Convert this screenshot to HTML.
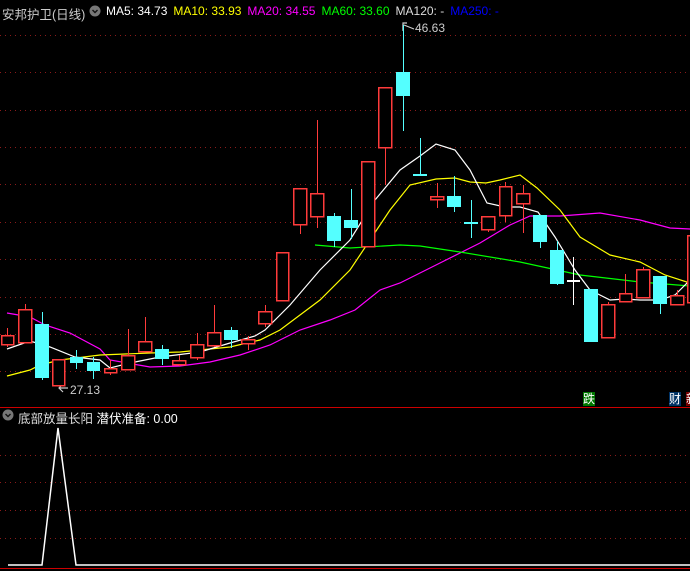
<!DOCTYPE html><html><head><meta charset="utf-8"><style>
body{margin:0;background:#000;width:690px;height:571px;overflow:hidden;position:relative;font-family:"Liberation Sans","Noto Sans CJK SC",sans-serif}
.t{position:absolute;font-size:12.5px;white-space:nowrap}
.s{margin-right:6px}
</style></head><body>
<svg width="690" height="571" style="position:absolute;left:0;top:0" shape-rendering="crispEdges">
<g stroke="#8a1a1a" stroke-dasharray="1 4">
<line x1="0" x2="690" y1="35.5" y2="35.5"/><line x1="0" x2="690" y1="72.5" y2="72.5"/><line x1="0" x2="690" y1="110.5" y2="110.5"/><line x1="0" x2="690" y1="147.5" y2="147.5"/><line x1="0" x2="690" y1="184.5" y2="184.5"/><line x1="0" x2="690" y1="222.5" y2="222.5"/><line x1="0" x2="690" y1="259.5" y2="259.5"/><line x1="0" x2="690" y1="297.5" y2="297.5"/><line x1="0" x2="690" y1="334.5" y2="334.5"/><line x1="0" x2="690" y1="371.5" y2="371.5"/>
<line x1="0" x2="690" y1="455.5" y2="455.5"/><line x1="0" x2="690" y1="482.5" y2="482.5"/><line x1="0" x2="690" y1="510.5" y2="510.5"/><line x1="0" x2="690" y1="538.5" y2="538.5"/>
</g>
<line x1="0" x2="690" y1="407.5" y2="407.5" stroke="#c00"/>
<line x1="0" x2="690" y1="568.5" y2="568.5" stroke="#c00"/>
<g shape-rendering="auto" fill="none" stroke-width="1.2">
<polyline stroke="#ff00ff" points="7,313 30,317 45,325 70,333 100,349 110,360 150,367 180,366 210,362 240,355 270,345 300,330 330,320 355,310 380,290 400,283 440,263 480,243 510,225 530,216 560,216 600,213 640,220 670,228 690,229"/>
<polyline stroke="#00ff00" points="315,245 350,248 400,245 420,246 460,252 520,262 580,275 640,282 690,286"/>
<polyline stroke="#ffff00" points="7,376 30,370 40,365 60,360 100,355 150,353 180,352 230,347 260,340 280,330 320,300 350,270 370,240 390,210 410,185 436,179 455,178 470,182 486,183 500,180 520,175 537,188 560,210 580,237 610,255 640,262 665,275 690,283"/>
<polyline stroke="#ffffff" points="7,349 30,341 50,347 75,357 100,360 110,368 130,363 160,357 200,352 230,343 255,336 265,330 290,305 320,270 350,240 375,200 400,170 420,156 436,144 455,150 470,170 487,203 505,207 520,207 538,212 555,237 575,270 590,290 610,300 625,299 640,300 660,300 675,295 690,280"/>
<polyline stroke="#fff" stroke-width="1.5" points="8,565 42,565 58,428 76,565 690,565"/>
<polyline stroke="#ccc" points="403,24 403,30 M403,24 407,24"/>
<path stroke="#ccc" d="M403,31 V23 H407 M404,25 L414,29"/>
<path stroke="#ccc" d="M63,392 L59,388 L63,384 M59,388 H68"/>
<path stroke="#222" stroke-width="1.5" d="M92,10 L95,13 L98,10 M4,413 L7,416 L10,413"/>
</g>
<g id="c"></g>
</svg>
<div class="t" style="left:2px;top:4px;color:#ccc">安邦护卫(日线)</div>
<svg style="position:absolute;left:89px;top:5px" width="12" height="12"><circle cx="6" cy="6" r="5.5" fill="#777"/><path d="M3.5,5 L6,7.5 L8.5,5" stroke="#111" stroke-width="1.4" fill="none"/></svg>
<div class="t" style="left:106px;top:4px;font-size:12px"><span class="s" style="color:#fff">MA5: 34.73</span><span class="s" style="color:#ff0">MA10: 33.93</span><span class="s" style="color:#f0f">MA20: 34.55</span><span class="s" style="color:#0f0">MA60: 33.60</span><span class="s" style="color:#ddd">MA120: -</span><span style="color:#00f">MA250: -</span></div>
<div class="t" style="left:415px;top:21px;color:#ccc;font-size:12px">46.63</div>
<div class="t" style="left:70px;top:383px;color:#ccc;font-size:12px">27.13</div>
<svg style="position:absolute;left:2px;top:409px" width="12" height="12"><circle cx="6" cy="6" r="5.5" fill="#777"/><path d="M3.5,5 L6,7.5 L8.5,5" stroke="#111" stroke-width="1.4" fill="none"/></svg>
<div class="t" style="left:18px;top:408px;color:#ddd">底部放量长阳 <span style="color:#fff">潜伏准备: 0.00</span></div>
<div class="t" style="left:583px;top:392px;color:#fff;background:#070;font-size:12px;line-height:14px">跌</div>
<div class="t" style="left:669px;top:392px;color:#fff;background:#036;font-size:12px;line-height:14px">财</div>
<div class="t" style="left:686px;top:392px;color:#fff;background:#700;font-size:12px;line-height:14px;width:4px;overflow:hidden">新</div>
<script>
var d=[[1,13,335,344,328,347,'r'],[18,31,309,342,304,342,'r'],[35,48,324,377,312,380,'c'],[52,64,359,385,359,385,'r'],[70,82,357,362,350,369,'c'],[87,99,362,370,357,379,'c'],[104,116,368,372,360,375,'r'],[121,134,355,369,329,369,'r'],[138,151,341,351,317,351,'r'],[155,168,349,358,345,365,'c'],[172,185,360,364,355,366,'r'],[190,203,344,357,333,360,'r'],[207,220,332,345,305,347,'r'],[224,237,330,339,327,348,'c'],[241,254,339,343,336,350,'r'],[258,271,311,323,305,327,'r'],[276,288,252,300,252,300,'r'],[293,306,188,224,188,234,'r'],[310,323,193,216,120,228,'r'],[327,340,216,240,213,247,'c'],[344,357,220,227,189,239,'c'],[361,374,161,246,161,246,'r'],[378,391,87,147,87,185,'r'],[396,409,72,95,25,131,'c'],[413,426,174,175,138,175,'c'],[430,443,196,199,183,208,'r'],[447,460,196,206,176,212,'c'],[464,477,222,223,200,238,'c'],[481,494,216,229,216,232,'r'],[499,511,186,215,182,222,'r'],[516,529,193,203,185,233,'r'],[533,546,215,241,215,248,'c'],[550,563,250,283,241,285,'c'],[567,579,280,281,257,305,'w'],[584,597,289,341,289,341,'c'],[601,614,304,337,302,337,'r'],[619,631,293,301,274,301,'r'],[636,649,269,297,267,297,'r'],[653,666,276,303,276,314,'c'],[670,683,295,304,290,304,'r'],[687,695,235,302,235,302,'r']];
var s='';d.forEach(function(a){var cx=Math.round((a[0]+a[1])/2)+.5;var col=a[6]=='r'?'#ff3b3b':a[6]=='c'?'#54ffff':'#fff';
s+='<line x1="'+cx+'" x2="'+cx+'" y1="'+a[4]+'" y2="'+a[5]+'" stroke="'+col+'"/>';
var h=Math.max(a[3]-a[2],1);
if(a[6]=='r')s+='<rect x="'+(a[0]+.5)+'" y="'+(a[2]+.5)+'" width="'+(a[1]-a[0])+'" height="'+h+'" fill="#000" stroke="'+col+'" stroke-width="1.5"/>';
else s+='<rect x="'+a[0]+'" y="'+a[2]+'" width="'+(a[1]-a[0]+1)+'" height="'+(h+1)+'" fill="'+col+'"/>';});
document.getElementById('c').innerHTML=s;
</script>
</body></html>
